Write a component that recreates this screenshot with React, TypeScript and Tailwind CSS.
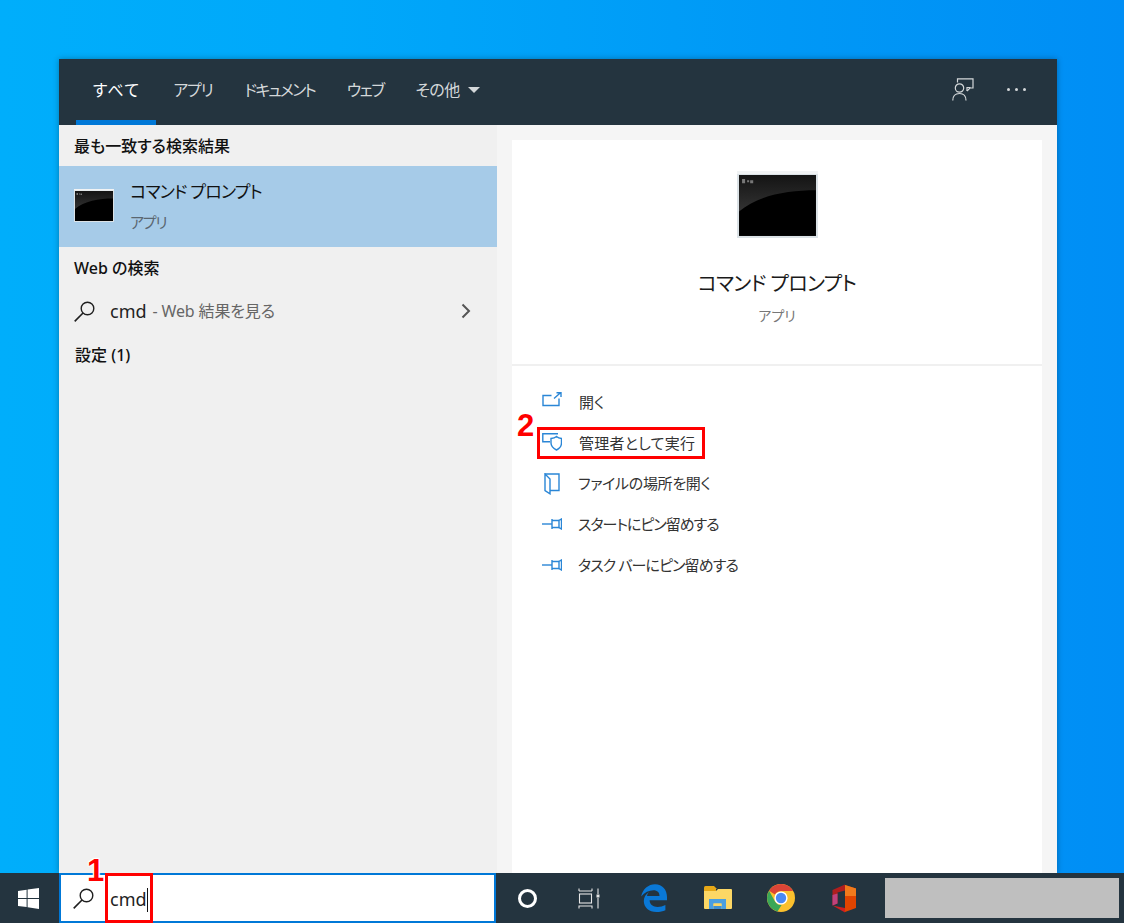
import React from 'react';

const font = "font-['Noto_Sans','Noto_Sans_CJK_JP',sans-serif] [font-feature-settings:'palt']";

function SearchIcon() {
    return (
        <svg width="21" height="21" viewBox="0 0 21 21" fill="none" stroke="#1f1f1f" strokeWidth="1.4">
            <circle cx="13.5" cy="7.5" r="6.3"/>
            <path d="M9 12 L0.7 20.4" strokeWidth="1.6"/>
        </svg>
    );
}

function CmdIcon({className, id}: { className: string; id: string }) {
    return (
        <svg className={className} viewBox="0 0 80 66" preserveAspectRatio="none">
            <defs>
                <linearGradient id={id} x1="0" y1="0" x2="0" y2="1">
                    <stop offset="0" stopColor="#141414"/>
                    <stop offset="1" stopColor="#333"/>
                </linearGradient>
            </defs>
            <rect x="0" y="0" width="80" height="66" fill="#dbe2e6"/>
            <rect x="0" y="0" width="80" height="3" fill="#f1f3f4"/>
            <rect x="2" y="4" width="76" height="60" fill="#000"/>
            <path d="M2 4 H78 V19 C50 19 20 24 2 40 Z" fill={`url(#${id})`}/>
            <path d="M5 8 h3 v4 h-3 z M10 9 h2 v2 h-2 z M13 9 h3 v3 h-3 z" fill="#777"/>
        </svg>
    );
}

function OpenIcon() {
    return (
        <svg width="20" height="20" viewBox="0 0 20 20" fill="none" stroke="#2a86d6" strokeWidth="1.4">
            <path d="M9.5 3.5 H1 V13.5 H17 V6.5"/>
            <path d="M12 6.5 L18.5 0.8 M14.5 0.7 H19 V5"/>
        </svg>
    );
}

function ShieldIcon() {
    return (
        <svg width="20" height="20" viewBox="0 0 20 20" fill="none" stroke="#2a86d6" strokeWidth="1.4">
            <path d="M16 0.7 H0.8 V8.8 H8"/>
            <path d="M14.5 3.5 C13 4.8 11.5 5.3 9 5.5 V10 C9 13 11.5 15.5 14.5 17 C17.5 15.5 19.5 13 19.5 10 V5.5 C17.5 5.3 16 4.8 14.5 3.5 Z"/>
        </svg>
    );
}

function FolderIcon() {
    return (
        <svg width="20" height="22" viewBox="0 0 20 22" fill="none" stroke="#2a86d6" strokeWidth="1.4">
            <path d="M3 1 H17 V17.5 H8"/>
            <path d="M3 1 V17.5 L8 20.8 V6 L3 1 Z"/>
        </svg>
    );
}

function PinIcon() {
    return (
        <svg width="20" height="12" viewBox="0 0 20 12" fill="none" stroke="#2a86d6" strokeWidth="1.4">
            <path d="M0 6 H10"/>
            <path d="M10 1 V11 M10 2.5 H17 M10 9.5 H17"/>
            <path d="M19.5 1 V11 L17 9.5 V2.5 Z"/>
        </svg>
    );
}

function WindowsLogo() {
    return (
        <svg width="21" height="21" viewBox="0 0 21 21" fill="#fff">
            <path d="M0 3 L8.6 1.8 V9.9 H0 Z"/>
            <path d="M9.6 1.6 L21 0 V9.9 H9.6 Z"/>
            <path d="M0 11 H8.6 V19.1 L0 18 Z"/>
            <path d="M9.6 11 H21 V21 L9.6 19.3 Z"/>
        </svg>
    );
}

function TaskViewIcon() {
    return (
        <svg width="22" height="21" viewBox="0 0 22 21" fill="none" stroke="#e6e6e6" strokeWidth="1.1">
            <path d="M1 3 V0.5 M14 3 V0.5 M1 3 H14"/>
            <rect x="1.5" y="6" width="12" height="9"/>
            <path d="M1 20.5 V18 H14 V20.5"/>
            <path d="M20 0.5 V6 M20 10 V20.5"/>
            <rect x="18.5" y="6.5" width="3" height="3" fill="#e6e6e6" stroke="none"/>
        </svg>
    );
}

function EdgeIcon() {
    return (
        <svg width="26" height="28" viewBox="0 0 26 28">
            <path fill="#0a78d6"
                  d="M0.2 12.5 C1.5 5 7.5 0.3 14 0.3 C21.5 0.3 26 6 26 13 V16.3 H8.6 C8.8 21 12.5 23 16.5 23 C19.5 23 22 22.3 24.4 21 V26.2 C21.8 27.4 19 28 15.5 28 C8 28 2.8 23.4 2.8 17 C2.8 13.5 4.5 10.3 8 8 C6.8 9.4 6.2 10.8 6 12 H18.5 C18.5 8.5 16.3 6.3 12.5 6.3 C8 6.3 3.5 8.5 0.2 12.5 Z"/>
        </svg>
    );
}

function ExplorerIcon() {
    return (
        <svg width="28" height="24" viewBox="0 0 28 24">
            <path fill="#e7a817" d="M0 1.5 Q0 0 1.5 0 H10 L13 3 H0 Z"/>
            <path fill="#e7a817" d="M0 2 H12 V6 H0 Z"/>
            <path fill="#fcd765" d="M0 5 L12 5 L14 3 H27 Q28 3 28 4 V22 Q28 23 27 23 H1 Q0 23 0 22 Z"/>
            <path fill="#4a9fe0" d="M5 13 H22 V23 H17.5 V17.5 H9.5 V23 H5 Z"/>
            <path fill="#fcd765" d="M9.5 17.5 H17.5 V20 H9.5 Z"/>
            <path fill="#3f8fd0" d="M9.5 20 H17.5 V23 H9.5 Z"/>
        </svg>
    );
}

function ChromeIcon() {
    return (
        <svg width="28" height="28" viewBox="0 0 28 28">
            <circle cx="14" cy="14" r="14" fill="#fbc02d"/>
            <path fill="#db4437" d="M14 0 A14 14 0 0 1 26.1 7 H14 A7 7 0 0 0 7.9 10.5 L2.1 6.8 A14 14 0 0 1 14 0 Z"/>
            <path fill="#3aa757" d="M2.1 6.8 L8 17.5 A7 7 0 0 0 14.6 21 L10.5 27.6 A14 14 0 0 1 2.1 6.8 Z"/>
            <circle cx="14" cy="14" r="6.6" fill="#fff"/>
            <circle cx="14" cy="14" r="5.2" fill="#4a89f3"/>
        </svg>
    );
}

function OfficeIcon() {
    return (
        <svg width="25" height="29" viewBox="0 0 25 29">
            <path fill="#e04400" d="M14 1 L25 4.5 V24 L14 28 Z"/>
            <path fill="#f17a1c" d="M14 1 L25 4.5 V12 H14 Z"/>
            <path fill="#b01e1e" d="M14 0.5 L1.5 6 V21.5 L6.5 19.5 V8.5 L14 6.5 Z"/>
            <path fill="#c0427c" d="M1.5 11 L6.5 9.5 V19.5 L1.5 21.5 Z"/>
            <path fill="#cf1f1f" d="M1.5 21.5 L14 28.5 V24 L6.5 22.5 Z"/>
        </svg>
    );
}

function TabItem({label, active, className}: { label: string; active?: boolean; className: string }) {
    return (
        <div
            className={`h-full flex items-center px-4 border-b-[5px] text-[16px] ${className} ${active ? 'border-[#0078d7] text-white' : 'border-transparent text-[#d4d8da]'}`}>
            {label}
        </div>
    );
}

function ActionRow({icon, label, className}: { icon: React.ReactNode; label: string; className?: string }) {
    return (
        <div className="h-[40.7px] flex items-center text-[15px] text-[#333]">
            <div className="w-[37px] flex">{icon}</div>
            <span className={className}>{label}</span>
        </div>
    );
}

function App() {
    return (
        <div
            className={`${font} relative w-[1124px] h-[923px] overflow-hidden flex flex-col bg-[linear-gradient(90deg,#00aefb_0%,#00a8fa_30%,#0098f6_70%,#008ef5_100%)]`}>
            <div className="flex-1 pt-[59px] pl-[59px]">
                <div className="w-[998px] h-[814px] flex flex-col shadow-[0_0_6px_rgba(0,0,0,0.3)]">
                    <div className="h-[66px] flex items-stretch bg-[#24343f] pl-[17px] pr-[31px]">
                        <TabItem label="すべて" active className="[font-feature-settings:normal] tracking-[0.7px]"/>
                        <TabItem label="アプリ" className="tracking-[-1.2px] ml-[1px]"/>
                        <TabItem label="ドキュメント" className="tracking-[-1.9px]"/>
                        <TabItem label="ウェブ" className="tracking-[-1.6px]"/>
                        <div className="h-full flex items-center pl-4 pb-[5px] gap-2 text-[16px] tracking-[-0.6px] text-[#d4d8da]">
                            その他
                            <span className="w-0 h-0 border-x-[6px] border-x-transparent border-t-[6px] border-t-[#d4d8da]"/>
                        </div>
                        <div className="ml-auto flex items-center gap-[33px] pb-[5px]">
                            <svg width="22" height="23" viewBox="0 0 22 23" fill="none" stroke="#d4d8da" strokeWidth="1.2">
                                <path d="M5.5 4.5 V0.8 H21 V10 H18 L15 13"/>
                                <path d="M15 13 V9.5 H18.5"/>
                                <circle cx="7.5" cy="10" r="4.2"/>
                                <path d="M0.8 22.5 C0.8 18 3.5 15.5 7.5 15.5 C11.5 15.5 14 18 14 22.5"/>
                            </svg>
                            <div className="flex gap-[5px]">
                                <span className="w-[3px] h-[3px] rounded-full bg-[#d4d8da]"/>
                                <span className="w-[3px] h-[3px] rounded-full bg-[#d4d8da]"/>
                                <span className="w-[3px] h-[3px] rounded-full bg-[#d4d8da]"/>
                            </div>
                        </div>
                    </div>
                    <div className="flex-1 flex min-h-0">
                        <div className="w-[438px] bg-[#f0f0f0] text-[#111]">
                            <div className="h-[41px] flex items-center pl-[15px] text-[16px] font-medium">最も一致する検索結果</div>
                            <div className="h-[81px] flex items-center bg-[#a6cbe8] pl-[15px]">
                                <CmdIcon id="cmdSmall" className="w-[40px] h-[33px] mt-[-2px]"/>
                                <div className="ml-[16px] mt-[-2px]">
                                    <div className="text-[17px] tracking-[-0.8px] leading-[26px] text-[#111]">コマンド プロンプト</div>
                                    <div className="text-[15px] tracking-[-1.2px] leading-[22px] mt-[6px] text-[#5a6670]">アプリ</div>
                                </div>
                            </div>
                            <div className="h-[42px] flex items-center pl-[15px] text-[16px] font-medium">Web の検索</div>
                            <div className="h-[44px] flex items-center pl-[15px] pr-[26px]">
                                <SearchIcon/>
                                <span className="ml-[15px] text-[18px] text-[#222]">cmd</span>
                                <span className="ml-[6px] text-[16px] tracking-[-0.15px] text-[#666]">- Web 結果を見る</span>
                                <svg className="ml-auto" width="10" height="16" viewBox="0 0 10 16" fill="none" stroke="#555" strokeWidth="2">
                                    <path d="M1.5 1.5 L8 8 L1.5 14.5"/>
                                </svg>
                            </div>
                            <div className="h-[44px] flex items-center pl-[16px] text-[16px] font-medium">設定 (1)</div>
                        </div>
                        <div className="flex-1 bg-[#f5f5f5] pt-[15px] pl-[15px] pr-[15px]">
                            <div className="h-full bg-white flex flex-col">
                                <div className="h-[226px] flex flex-col items-center pt-[31px] border-b-2 border-[#f0f0f0]">
                                    <CmdIcon id="cmdLarge" className="w-[81px] h-[67px]"/>
                                    <div className="mt-[30px] text-[20px] tracking-[-0.6px] leading-[32px] text-[#1a1a1a]">コマンド プロンプト</div>
                                    <div className="mt-[6px] text-[14px] leading-[20px] text-[#777]">アプリ</div>
                                </div>
                                <div className="pt-[16px] pl-[30px]">
                                    <ActionRow icon={<OpenIcon/>} label="開く"/>
                                    <ActionRow icon={<ShieldIcon/>} label="管理者として実行" className="tracking-[0.25px]"/>
                                    <ActionRow icon={<FolderIcon/>} label="ファイルの場所を開く" className="ml-[-1px] tracking-[-0.3px]"/>
                                    <ActionRow icon={<PinIcon/>} label="スタートにピン留めする" className="ml-[-1px] tracking-[-1px]"/>
                                    <ActionRow icon={<PinIcon/>} label="タスク バーにピン留めする" className="ml-[-1px] tracking-[-0.9px]"/>
                                </div>
                            </div>
                        </div>
                    </div>
                </div>
            </div>
            <div className="h-[50px] flex items-stretch bg-[#24343f]">
                <div className="w-[59px] flex items-center justify-center pr-[3px]">
                    <WindowsLogo/>
                </div>
                <div className="w-[437px] mr-[1px] bg-white border-2 border-[#0078d7] flex items-center pl-[12px]">
                    <SearchIcon/>
                    <span className="ml-[16px] mt-[3px] text-[18px] text-[#222]">cmd</span>
                    <span className="w-[1.5px] h-[24px] bg-[#111] mt-[3px]"/>
                </div>
                <div className="flex-1 flex items-center pl-[21px] pr-[5px]">
                    <span className="w-[19px] h-[19px] rounded-full border-[3px] border-white"/>
                    <div className="ml-[41px]"><TaskViewIcon/></div>
                    <div className="ml-[41px]"><EdgeIcon/></div>
                    <div className="ml-[37px]"><ExplorerIcon/></div>
                    <div className="ml-[35px]"><ChromeIcon/></div>
                    <div className="ml-[36px]"><OfficeIcon/></div>
                    <div className="ml-auto w-[234px] h-[40px] bg-[#bfbfbf]"/>
                </div>
            </div>

            <span
                className="absolute left-[87px] top-[854px] text-[31px] leading-[34px] font-bold text-[#f00] font-['Liberation_Sans',sans-serif] [text-shadow:0_0_2px_#fff,1px_1px_1px_#fff,-1px_-1px_1px_#fff,1px_-1px_1px_#fff,-1px_1px_1px_#fff]">1</span>
            <div className="absolute left-[105px] top-[873px] w-[48px] h-[50px] border-[3px] border-[#f00]"/>
            <span
                className="absolute left-[517px] top-[409px] text-[31px] leading-[34px] font-bold text-[#f00] font-['Liberation_Sans',sans-serif]">2</span>
            <div className="absolute left-[537px] top-[427px] w-[168px] h-[32px] border-[3px] border-[#f00]"/>
        </div>
    );
}

export default App;
